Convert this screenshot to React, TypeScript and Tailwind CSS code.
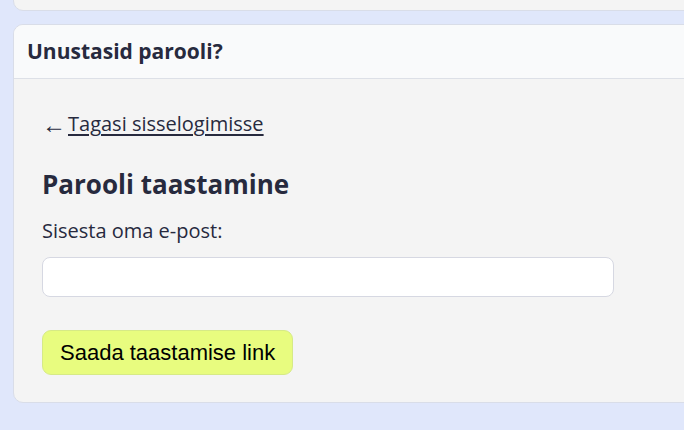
export default function App() {
  return (
    <div
      className="min-h-[430px] overflow-hidden bg-[#e0e7fb] pl-[13px] text-[#272a3e]"
      style={{ fontFamily: '"Open Sans", "Noto Sans", sans-serif' }}
    >
      <div className="-mt-4 mb-[13px] h-[27px] w-[720px] rounded-b-[10px] border border-[#d9dde8] bg-[#f4f4f4]" />

      <div className="w-[720px] overflow-hidden rounded-[10px] border border-[#d9dde8] bg-[#f4f4f4]">
        <div className="flex h-[54px] items-center border-b border-[#dde0e7] bg-[#f9fafb] px-[13px]">
          <h2 className="text-[21px] font-bold">Unustasid parooli?</h2>
        </div>

        <div className="px-[28px] pb-[27px] pt-[30px]">
          <p className="flex items-center text-[20px] leading-[30px]">
            <span className="mr-[2px] text-[24px] leading-[30px]">←</span>
            <a href="#" className="underline underline-offset-[3px]">Tagasi sisselogimisse</a>
          </p>

          <h1 className="mt-[28px] text-[26px] font-bold leading-[34px]">Parooli taastamine</h1>

          <label className="mt-[16px] block text-[20px] leading-[28px]">Sisesta oma e-post:</label>
          <input
            type="email"
            className="mt-[12px] block h-[40px] w-[572px] rounded-[8px] border border-[#d6d8e2] bg-white px-3"
          />

          <button
            className="mt-[33px] h-[45px] rounded-[9px] border border-[#d6ea86] bg-[#e8fc7f] px-[17px] text-[22px] text-black"
            style={{ fontFamily: '"Liberation Sans", Arial, sans-serif' }}
          >
            Saada taastamise link
          </button>
        </div>
      </div>
    </div>
  );
}
